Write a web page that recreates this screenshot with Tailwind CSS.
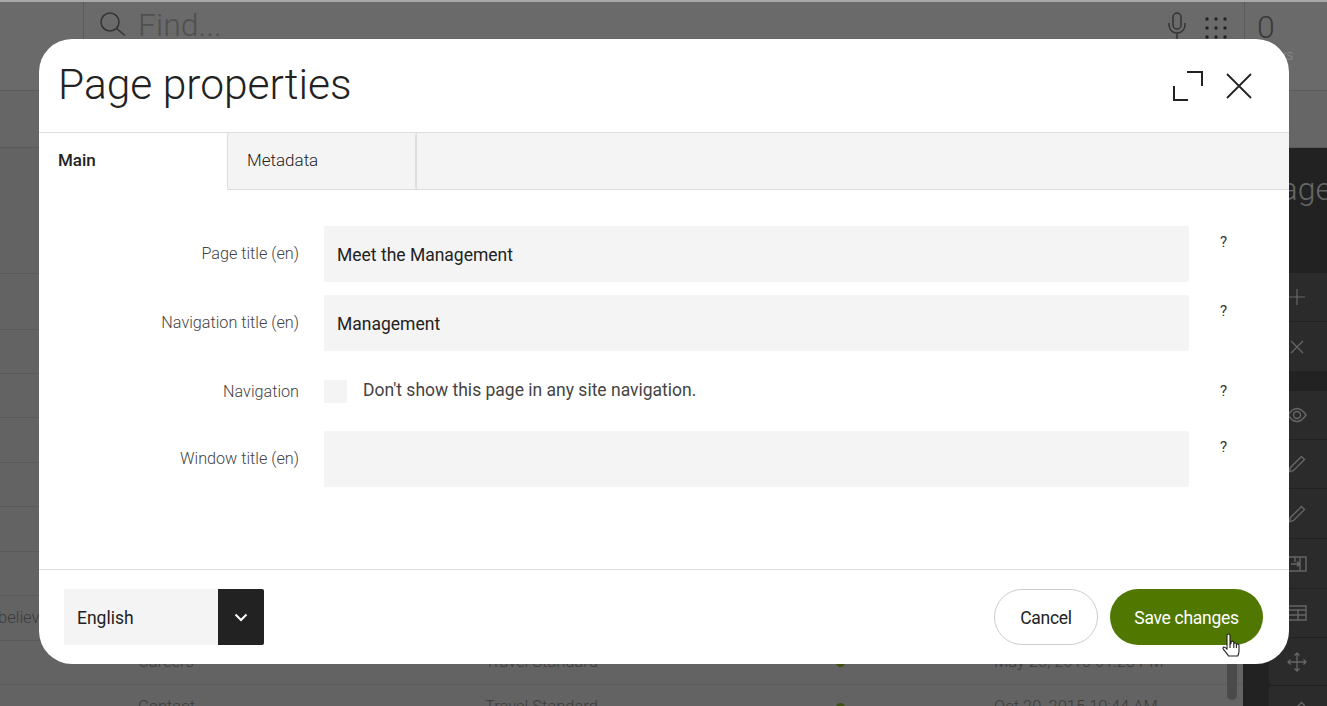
<!DOCTYPE html>
<html lang="en">
<head>
    <meta charset="UTF-8">
    <meta name="viewport" content="width=device-width, initial-scale=1.0">
    <title>Page properties</title>
    <script src="https://cdn.jsdelivr.net/npm/@tailwindcss/browser@4"></script>
</head>
<body class="[font-family:Roboto,sans-serif] bg-[#636363] overflow-hidden">
<div class="relative w-[1327px] h-[706px] overflow-hidden">

    <!-- dimmed app behind the dialog -->
    <div class="flex flex-col h-full">
        <div class="flex h-[91px] shrink-0 border-t-2 border-b border-t-[#a8a8a8] border-b-[#5a5a5a] bg-[#6a6a6a]">
            <div class="w-[84px] border-r border-[#5a5a5a]"></div>
            <div class="flex-1 flex items-start pl-[15px] pt-[5px] border-r border-[#5a5a5a]">
                <svg class="w-[30px] h-[32px] mt-[1px]" viewBox="0 0 30 32" fill="none" stroke="#333" stroke-width="1.5"><circle cx="11" cy="14" r="9"/><path d="M17.500 20.500L26 27.500"/></svg>
                <span class="ml-[9px] text-[32px] leading-[36px] font-light text-[#505050]">Find...</span>
                <svg class="ml-auto mt-[5px] w-[20px] h-[28px]" viewBox="0 0 20 28" fill="none" stroke="#333" stroke-width="1.5"><rect x="6" y="1" width="8" height="16" rx="4"/><path d="M2 11v2a8 8 0 0 0 16 0v-2M10 21v6"/></svg>
                <svg class="ml-[17px] mr-[16px] mt-[9px] w-[24px] h-[24px]" viewBox="0 0 24 24" fill="#222"><circle cx="3" cy="3" r="1.7"/><circle cx="12" cy="3" r="1.7"/><circle cx="21" cy="3" r="1.7"/><circle cx="3" cy="12" r="1.7"/><circle cx="12" cy="12" r="1.7"/><circle cx="21" cy="12" r="1.7"/><circle cx="3" cy="21" r="1.7"/><circle cx="12" cy="21" r="1.7"/><circle cx="21" cy="21" r="1.7"/></svg>
            </div>
            <div class="w-[82px] pl-[12px] pt-[9px] leading-none">
                <div class="text-[32px] font-light text-[#3a3a3a]">0</div>
                <div class="text-[14px] font-light text-[#8a8a8a] pl-[6px] pt-[5px]">Days</div>
            </div>
        </div>
        <div class="h-[57px] shrink-0 border-b border-[#5a5a5a] bg-[#666666]"></div>

        <div class="flex flex-1 min-h-0">
            <div class="relative w-[1243px] shrink-0 flex flex-col text-[16.5px] font-light text-[#3c3c3c]">
                <div class="h-[126px] shrink-0 border-b border-[#5a5a5a]"></div>
                <div class="h-[56px] shrink-0 border-b border-[#5a5a5a]"></div>
                <div class="h-[44px] shrink-0 border-b border-[#5a5a5a]"></div>
                <div class="h-[44px] shrink-0 border-b border-[#5a5a5a]"></div>
                <div class="h-[45px] shrink-0 border-b border-[#5a5a5a]"></div>
                <div class="h-[44px] shrink-0 border-b border-[#5a5a5a]"></div>
                <div class="h-[45px] shrink-0 border-b border-[#5a5a5a]"></div>
                <div class="h-[44px] shrink-0 border-b border-[#5a5a5a]"></div>
                <div class="h-[45px] shrink-0 border-b border-[#5a5a5a] flex items-center"><span class="-ml-[2px]">believe</span></div>
                <div class="h-[44px] shrink-0 border-b border-[#5a5a5a] flex items-center">
                    <span class="w-[347px] ml-[138px] shrink-0">Careers</span>
                    <span class="w-[351px] shrink-0">Travel Standard</span>
                    <span class="w-[158px] shrink-0"><span class="block w-[9px] h-[9px] rounded-full bg-[#3f5010]"></span></span>
                    <span class="whitespace-nowrap">May 20, 2016 01:23 PM</span>
                </div>
                <div class="h-[44px] shrink-0 flex items-center">
                    <span class="w-[347px] ml-[138px] shrink-0">Contact</span>
                    <span class="w-[351px] shrink-0">Travel Standard</span>
                    <span class="w-[158px] shrink-0"><span class="block w-[9px] h-[9px] rounded-full bg-[#3f5010]"></span></span>
                    <span class="whitespace-nowrap">Oct 20, 2015 10:44 AM</span>
                </div>
                <div class="absolute right-[6px] top-[400px] bottom-[6px] w-[10px] rounded-full bg-[#4a4a4a]"></div>
            </div>

            <div class="w-[84px] shrink-0 overflow-hidden flex flex-col bg-[#222222] text-[#666666]">
                <div class="h-[125px] shrink-0 pl-[18px] pt-[21px] text-[32px] font-light leading-[40px]">Page</div>
                <div class="ml-[26px] flex flex-col">
                    <div class="h-[49px] pr-[3px] flex items-center justify-center bg-[#2b2b2b] border-b border-[#222]"><svg class="w-[16px] h-[16px]" viewBox="0 0 16 16" stroke="#666" stroke-width="1.2"><path d="M8 0v16M0 8h16"/></svg></div>
                    <div class="h-[49px] pr-[3px] flex items-center justify-center bg-[#2b2b2b]"><svg class="w-[16px] h-[16px]" viewBox="0 0 16 16" stroke="#666" stroke-width="1.2"><path d="M2 2l12 12M14 2L2 14"/></svg></div>
                    <div class="h-[20px]"></div>
                    <div class="h-[49px] pr-[3px] flex items-center justify-center bg-[#2b2b2b] border-b border-[#222]"><svg class="w-[20px] h-[16px]" viewBox="0 0 20 16" fill="none" stroke="#666" stroke-width="1.4"><path d="M1 8c3-4.500 6-6.500 9-6.500s6 2 9 6.500c-3 4.500-6 6.500-9 6.500S4 12.500 1 8z"/><circle cx="10" cy="8" r="3.500"/></svg></div>
                    <div class="h-[49px] pr-[3px] flex items-center justify-center bg-[#2b2b2b] border-b border-[#222]"><svg class="w-[20px] h-[20px]" viewBox="0 0 20 20" fill="none" stroke="#666" stroke-width="1.4"><path d="M2 18l1.500-4.500L14.500 2.500l3 3L6.500 16.500z"/></svg></div>
                    <div class="h-[50px] pr-[3px] flex items-center justify-center bg-[#2b2b2b] border-b border-[#222]"><svg class="w-[20px] h-[20px]" viewBox="0 0 20 20" fill="none" stroke="#666" stroke-width="1.4"><path d="M2 18l1.500-4.500L14.500 2.500l3 3L6.500 16.500z"/></svg></div>
                    <div class="h-[50px] pr-[3px] flex items-center justify-center bg-[#2b2b2b] border-b border-[#222]"><svg class="w-[20px] h-[16px]" viewBox="0 0 20 16" fill="none" stroke="#666" stroke-width="1.4"><path d="M1 1h18v14H1zM8 1v5M13 1v14M4 8h8M10 5.500L12.500 8 10 10.500"/></svg></div>
                    <div class="h-[49px] pr-[3px] flex items-center justify-center bg-[#2b2b2b] border-b border-[#222]"><svg class="w-[20px] h-[16px]" viewBox="0 0 20 16" fill="none" stroke="#666" stroke-width="1.4"><path d="M1 1h18v14H1zM1 5h18M1 10h18M11 5v10"/></svg></div>
                    <div class="h-[48px] pr-[3px] flex items-center justify-center bg-[#2b2b2b] rounded-l-[4px] border-b border-[#222]"><svg class="w-[20px] h-[20px]" viewBox="0 0 20 20" fill="none" stroke="#666" stroke-width="1.3"><path d="M10 1v18M1 10h18M7.500 3.500L10 1l2.500 2.500M7.500 16.500L10 19l2.500-2.500M3.500 7.500L1 10l2.500 2.500M16.500 7.500L19 10l-2.500 2.500"/></svg></div>
                    <div class="h-[49px] pr-[3px] pt-[14px] flex justify-center bg-[#2b2b2b] rounded-l-[4px]"><svg class="w-[20px] h-[20px]" viewBox="0 0 20 20" fill="none" stroke="#666" stroke-width="1.4"><path d="M2 18l1.500-4.500L14.500 2.500l3 3L6.500 16.500z"/></svg></div>
                </div>
            </div>
        </div>
    </div>

    <!-- dialog -->
    <div class="absolute left-[39px] top-[39px] w-[1250px] h-[625px] flex flex-col bg-white rounded-[33px] overflow-hidden text-[#222222]">
        <div class="h-[93px] shrink-0 flex items-start pl-[19px]">
            <h1 class="mt-[19px] text-[42.5px] leading-[54px] font-light">Page properties</h1>
            <svg class="ml-auto mt-[32px] w-[31px] h-[30px]" viewBox="0 0 31 30" fill="none" stroke="#222" stroke-width="2"><path d="M15 1h15v14M2 15v14h14"/></svg>
            <svg class="ml-[23px] mr-[37px] mt-[34px] w-[26px] h-[26px]" viewBox="0 0 26 26" fill="none" stroke="#222" stroke-width="1.800"><path d="M1 1l24 24M25 1L1 25"/></svg>
        </div>

        <div class="h-[58px] shrink-0 flex border-t border-b border-[#dddddd] bg-[#f4f4f4] text-[17px]">
            <div class="w-[188px] h-[57px] pl-[19px] pt-[15px] bg-white font-medium">Main</div>
            <div class="w-[189px] pl-[19px] pt-[15px] border-x border-[#dddddd] font-light rounded-[3px]">Metadata</div>
            <div class="flex-1 border-l border-[#dddddd]"></div>
        </div>

        <div class="flex-1 pt-[36px] border-b border-[#dddddd]">
            <div class="grid grid-cols-[260px_865px_1fr] gap-x-[25px] items-start">
                <label class="pt-[18px] text-right text-[16.2px] leading-[20px] font-light text-[#444444]">Page title (en)</label>
                <div class="h-[56px] flex items-center pl-[13px] pt-[2px] bg-[#f4f4f4] rounded-[2px] text-[17.5px]">Meet the Management</div>
                <span class="pl-[6px] pt-[7px] text-[15px] leading-[18px] text-[#333333]">?</span>
            </div>
            <div class="mt-[13px] grid grid-cols-[260px_865px_1fr] gap-x-[25px] items-start">
                <label class="pt-[18px] text-right text-[16.2px] leading-[20px] font-light text-[#444444]">Navigation title (en)</label>
                <div class="h-[56px] flex items-center pl-[13px] pt-[2px] bg-[#f4f4f4] rounded-[2px] text-[17.5px]">Management</div>
                <span class="pl-[6px] pt-[7px] text-[15px] leading-[18px] text-[#333333]">?</span>
            </div>
            <div class="mt-[29px] grid grid-cols-[260px_865px_1fr] gap-x-[25px] items-start">
                <label class="pt-[2px] text-right text-[16.2px] leading-[20px] font-light text-[#444444]">Navigation</label>
                <div class="flex items-start">
                    <span class="w-[23px] h-[23px] bg-[#f4f4f4]"></span>
                    <span class="ml-[16px] text-[17.5px] leading-[20px] text-[#444444]">Don't show this page in any site navigation.</span>
                </div>
                <span class="pl-[6px] pt-[2px] text-[15px] leading-[18px] text-[#333333]">?</span>
            </div>
            <div class="mt-[28px] grid grid-cols-[260px_865px_1fr] gap-x-[25px] items-start">
                <label class="pt-[18px] text-right text-[16.2px] leading-[20px] font-light text-[#444444]">Window title (en)</label>
                <div class="h-[56px] bg-[#f4f4f4] rounded-[2px]"></div>
                <span class="pl-[6px] pt-[7px] text-[15px] leading-[18px] text-[#333333]">?</span>
            </div>
        </div>

        <div class="h-[94px] shrink-0 flex items-start pt-[19px] pl-[25px] pr-[26px]">
            <div class="w-[200px] h-[56px] flex bg-[#f4f4f4] text-[17.5px]">
                <span class="flex-1 flex items-center pl-[13px] pt-[2px]">English</span>
                <span class="w-[46px] flex items-center justify-center bg-[#222222] rounded-r-[2px]">
                    <svg class="w-[14px] h-[9px]" viewBox="0 0 14 9" fill="none" stroke="#fff" stroke-width="2"><path d="M1.500 1.500L7 7l5.500-5.500"/></svg>
                </span>
            </div>
            <button class="ml-auto w-[104px] h-[56px] pt-[2px] rounded-full border border-[#cccccc] text-[17.5px] tracking-[-0.3px]">Cancel</button>
            <button class="ml-[12px] w-[153px] h-[56px] pt-[2px] rounded-full bg-[#507800] text-white text-[17.5px] tracking-[-0.3px]">Save changes</button>
        </div>
    </div>

    <!-- mouse pointer -->
    <svg class="absolute left-[1221px] top-[633px] w-[20px] h-[27px]" viewBox="0 0 20 27" fill="#fff" stroke="#222" stroke-width="1.100" stroke-linejoin="round"><path d="M6 2.500a1.500 1.500 0 0 1 3 0V11l1-.3V9.500a1.400 1.400 0 0 1 2.800 0v1.300a1.400 1.400 0 0 1 2.600.3v.6a1.400 1.400 0 0 1 2.600.6V18c0 2-.5 3.500-1.200 5H7.500C6 21 4.500 18.500 2.500 16.500c-1-1.200-.5-2.500.8-2.300 1 .2 2 1 2.700 2z"/><path d="M9 11v4M12.800 11v4M15.400 11.700V15" fill="none"/></svg>
</div>
</body>
</html>
